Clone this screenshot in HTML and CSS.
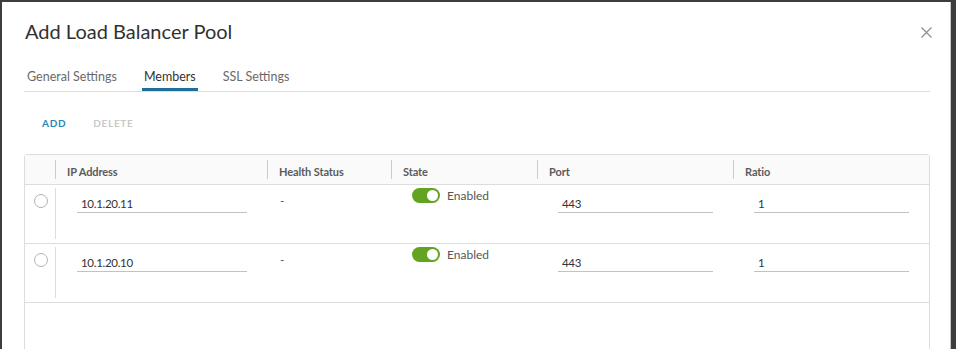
FILE: index.html
```html
<!DOCTYPE html>
<html lang="en">
<head>
  <meta charset="UTF-8" />
  <title>Add Load Balancer Pool</title>
  <link rel="stylesheet" href="styles.css">
</head>
<body>

<div class="modal">
  <div class="modal-header">
    <h3 class="modal-title">Add Load Balancer Pool</h3>
    <button class="close" aria-label="Close">
      <svg width="11" height="11" viewBox="0 0 11 11"><path d="M0.5 0.5 L10.5 10.5 M10.5 0.5 L0.5 10.5" stroke="#8c8c8c" stroke-width="1.1" fill="none"/></svg>
    </button>
  </div>

  <ul class="tabs">
    <li class="tab">General Settings</li>
    <li class="tab active">Members</li>
    <li class="tab">SSL Settings</li>
  </ul>

  <div class="actions">
    <button class="btn-link">ADD</button>
    <button class="btn-link disabled">DELETE</button>
  </div>

  <div class="datagrid">
    <div class="dg-row dg-head">
      <div class="dg-cell select"></div>
      <div class="dg-cell">IP Address</div>
      <div class="dg-cell">Health Status</div>
      <div class="dg-cell">State</div>
      <div class="dg-cell">Port</div>
      <div class="dg-cell">Ratio</div>
    </div>

    <div class="dg-row">
      <div class="dg-cell select"><span class="radio"></span></div>
      <div class="dg-cell ip"><input class="field" value="10.1.20.11"></div>
      <div class="dg-cell health">-</div>
      <div class="dg-cell state"><span class="toggle"></span><span>Enabled</span></div>
      <div class="dg-cell"><input class="field" value="443"></div>
      <div class="dg-cell"><input class="field" value="1"></div>
    </div>

    <div class="dg-row">
      <div class="dg-cell select"><span class="radio"></span></div>
      <div class="dg-cell ip"><input class="field" value="10.1.20.10"></div>
      <div class="dg-cell health">-</div>
      <div class="dg-cell state"><span class="toggle"></span><span>Enabled</span></div>
      <div class="dg-cell"><input class="field" value="443"></div>
      <div class="dg-cell"><input class="field" value="1"></div>
    </div>
  </div>
</div>

</body>
</html>
```

FILE: styles.css
```css
html, body { margin: 0; height: 100%; overflow: hidden; }
body { background-color: #3d3d3d; font-family: Lato, "Noto Sans", sans-serif; color: #333; }

.modal { background: #fff; margin: 2px 5px 0 2px; height: 347px; padding: 17px 20px 0 22px; border-right: 1px solid #c8c8c8; }

.modal-header { display: flex; justify-content: space-between; align-items: flex-start; }
.modal-title { margin: 0; font-size: 20px; line-height: 24px; font-weight: 400; color: #313131; padding-left: 1px; }
.close { background: none; border: none; padding: 0; margin: 8px -2px 0 0; width: 11px; height: 11px; cursor: pointer; }
.close svg { display: block; }

.tabs { list-style: none; margin: 26px 0 0 0; padding: 0; display: flex; gap: 23px; border-bottom: 1px solid #ddd; }
.tab { font-size: 12.5px; line-height: 16px; padding: 0 2px 6px; color: #6a6a6a; }
.tab:first-child { padding-left: 3px; }
.tab.active { color: #333; box-shadow: inset 0 -3px 0 #1d6e9b; }

.actions { margin-top: 24px; padding-left: 18px; display: flex; gap: 27px; }
.btn-link { background: none; border: none; padding: 0; font-family: inherit; font-size: 10px; line-height: 14px; font-weight: 700; letter-spacing: 0.7px; color: #2b86b8; cursor: pointer; }
.btn-link.disabled { color: #c8c8c8; cursor: default; }

.datagrid { margin-top: 24px; border: 1px solid #ddd; border-radius: 3px; height: 260px; }

.dg-row { display: grid; grid-template-columns: 30px 212px 124px 146px 196px 1fr; height: 58px; border-bottom: 1px solid #ddd; }
.dg-head { height: 29px; background: #fafafa; }
.dg-head .dg-cell { display: flex; align-items: center; margin: 5px 0; border-left: 1px solid #ccc; padding-left: 11px; font-size: 11px; font-weight: 700; color: #5a5a5a; letter-spacing: -0.1px; }
.dg-head .dg-cell.select { border-left: none; }

.dg-cell { padding: 4px 20px 0 21px; font-size: 12px; color: #565656; }
.dg-cell.select { padding: 9px 0 0 9px; }
.dg-cell.ip { border-left: 1px solid #ddd; margin: 3px 0 4px; padding-top: 1px; }
.dg-cell.health { padding: 8px 0 0 13px; }
.dg-cell.state { display: flex; align-items: center; align-self: start; gap: 7px; padding-top: 3px; }

.radio { display: block; width: 12px; height: 12px; border: 1px solid #b3b3b3; border-radius: 50%; }
.toggle { display: inline-block; width: 28px; height: 15px; border-radius: 8px; background: #62a420; position: relative; }
.toggle::after { content: ""; position: absolute; right: 2px; top: 2px; width: 11px; height: 11px; border-radius: 50%; background: #fff; }

.field { display: block; width: 100%; box-sizing: border-box; height: 24px; border: none; border-bottom: 1px solid #c2c2c2; padding: 5px 4px 0; font-family: inherit; font-size: 11.5px; letter-spacing: -0.3px; color: #333; outline: none; }
```
